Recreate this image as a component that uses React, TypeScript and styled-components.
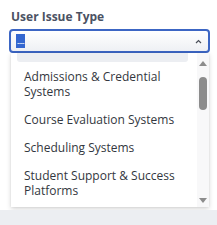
import styled, { createGlobalStyle } from "styled-components";

const GlobalStyle = createGlobalStyle`
    html, body {
        margin: 0;
        padding: 0;
        background: #ffffff;
        font-family: "Open Sans", "Noto Sans", sans-serif;
    }
`;

const Page = styled.div`
    display: flex;
    flex-direction: column;
    width: 217px;
    height: 225px;
    overflow: hidden;
`;

const Field = styled.div`
    display: flex;
    flex-direction: column;
    padding: 9px 7px 0 9px;
`;

const Label = styled.label`
    font-size: 12px;
    line-height: 16px;
    font-weight: 700;
    color: #4b5263;
    margin: 0 0 4px 2px;
`;

const SelectBox = styled.div`
    display: flex;
    align-items: center;
    justify-content: space-between;
    height: 24px;
    box-sizing: border-box;
    border: 2px solid #3c66c4;
    border-radius: 4px;
    background: linear-gradient(#ffffff, #eef0f4);
    padding: 0 6px 0 5px;
`;

const Selected = styled.span`
    display: inline-block;
    padding: 3px 1px 0;
    background: #3467d0;
    color: #ffffff;
    font-size: 9px;
    line-height: 11px;
    letter-spacing: -0.5px;
`;

const Dropdown = styled.div`
    display: flex;
    flex-direction: row;
    height: 154px;
    margin: 0 1px 0 2px;
    background: #ffffff;
    box-shadow: 0 2px 5px rgba(0, 0, 0, 0.16), 0 0 2px rgba(0, 0, 0, 0.08);
    overflow: hidden;
`;

const ListArea = styled.div`
    flex: 1;
    display: flex;
    flex-direction: column;
    padding: 0 9px 0 6px;
    overflow: hidden;
`;

const ActiveSliver = styled.div`
    flex: none;
    height: 9px;
    background: #eceef2;
    border-radius: 0 0 3px 3px;
`;

const Option = styled.div`
    flex: none;
    font-size: 12px;
    line-height: 15px;
    color: #333740;
    padding: 7px 6px 6px 7px;
`;

const ScrollTrack = styled.div`
    flex: none;
    width: 12px;
    display: flex;
    flex-direction: column;
    align-items: center;
    background: #f8f8f9;
    padding: 8px 0 0;
`;

const Arrow = styled.div<{ $down?: boolean }>`
    width: 0;
    height: 0;
    border-left: 4px solid transparent;
    border-right: 4px solid transparent;
    ${(p) => (p.$down ? "border-top: 5px solid #8c8c8c;" : "border-bottom: 5px solid #8c8c8c;")}
    margin-top: ${(p) => (p.$down ? "auto" : "0")};
    margin-bottom: ${(p) => (p.$down ? "4px" : "0")};
`;

const Thumb = styled.div`
    width: 8px;
    height: 33px;
    border-radius: 4px;
    background: #8c8c8c;
    margin-top: 11px;
`;

const Footer = styled.div`
    flex: 1;
    margin-top: 3px;
    background: #eceef2;
`;

const options = [
    "Admissions & Credential Systems",
    "Course Evaluation Systems",
    "Scheduling Systems",
    "Student Support & Success Platforms",
];

export default function App() {
    return (
        <Page>
            <GlobalStyle />
            <Field>
                <Label>User Issue Type</Label>
                <SelectBox>
                    <Selected>---</Selected>
                    <svg width="7" height="5" viewBox="0 0 7 5">
                        <path d="M1 4 L3.5 1.5 L6 4" fill="none" stroke="#4a4f5a" strokeWidth="1.2" />
                    </svg>
                </SelectBox>
                <Dropdown>
                    <ListArea>
                        <ActiveSliver />
                        {options.map((o) => (
                            <Option key={o}>{o}</Option>
                        ))}
                    </ListArea>
                    <ScrollTrack>
                        <Arrow />
                        <Thumb />
                        <Arrow $down />
                    </ScrollTrack>
                </Dropdown>
            </Field>
            <Footer />
        </Page>
    );
}
